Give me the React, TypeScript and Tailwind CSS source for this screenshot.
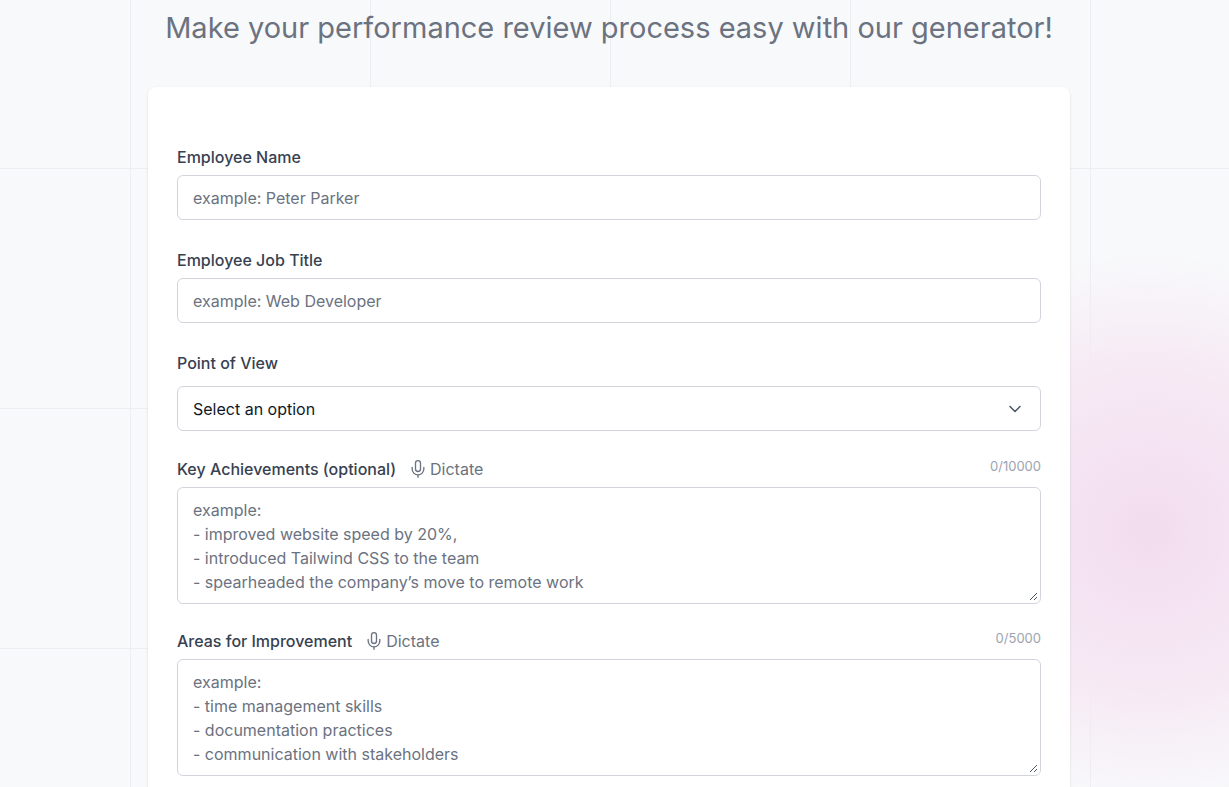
import { ChevronDown, Mic } from "lucide-react";

const font = { fontFamily: "Inter, 'Noto Sans', sans-serif" };

function Label({ text, dictate, count }: { text: string; dictate?: boolean; count?: string }) {
  return (
    <div className="mb-2 flex h-[20px] items-center justify-between">
      <div className="flex items-center gap-3">
        <span className="text-[16px] font-medium text-[#374151]">{text}</span>
        {dictate && (
          <span className="flex items-center gap-0.5 text-[16px] text-[#6b7280]">
            <Mic className="h-5 w-5" strokeWidth={1.6} />
            Dictate
          </span>
        )}
      </div>
      {count && <span className="-mt-1 text-[13px] text-[#9ca3af]">{count}</span>}
    </div>
  );
}

function Input({ placeholder }: { placeholder: string }) {
  return (
    <div className="flex h-[45px] items-center rounded-md border border-[#d1d5db] bg-white px-[15px] text-[16px] text-[#6b7280]">
      {placeholder}
    </div>
  );
}

function Area({ lines }: { lines: string[] }) {
  return (
    <div className="relative h-[117px] rounded-md border border-[#d1d5db] bg-white px-[15px] pt-[10px] text-[16px] leading-6 text-[#6b7280]">
      {lines.map((l) => (
        <div key={l}>{l}</div>
      ))}
      <svg className="absolute bottom-0.5 right-0.5 h-2.5 w-2.5" viewBox="0 0 10 10">
        <path d="M9 2L2 9M9 6L6 9" stroke="#4b5563" strokeWidth="1" />
      </svg>
    </div>
  );
}

export default function App() {
  return (
    <div
      className="relative min-h-[787px] overflow-hidden bg-[#f8f9fb] bg-[linear-gradient(to_right,#eceef2_1px,transparent_1px),linear-gradient(to_bottom,#eceef2_1px,transparent_1px)] bg-[size:240px_240px] bg-[position:130px_168px]"
      style={font}
    >
      <div className="pointer-events-none absolute right-[-200px] top-[250px] h-[560px] w-[560px] rounded-full bg-[radial-gradient(circle,#f2dcef_0%,#f6e9f4_40%,transparent_70%)]" />
      <div className="relative w-[1218px]">
        <h1 className="pt-[8px] text-center text-[29px] leading-10 text-[#6b7280]">
          Make your performance review process easy with our generator!
        </h1>
        <div className="mx-auto mt-[39px] w-[922px] rounded-lg bg-white px-[29px] pb-10 pt-[60px] shadow-sm">
          <div className="flex flex-col gap-[32px]">
            <div>
              <Label text="Employee Name" />
              <Input placeholder="example: Peter Parker" />
            </div>
            <div className="-mt-[2px]">
              <Label text="Employee Job Title" />
              <Input placeholder="example: Web Developer" />
            </div>
            <div className="-mt-[2px]">
              <Label text="Point of View" />
              <div className="mt-[13px] flex h-[45px] items-center justify-between rounded-md border border-[#d1d5db] bg-white px-[15px] text-[16px] text-[#111827]">
                Select an option
                <ChevronDown className="h-5 w-5 text-[#4b5563]" strokeWidth={1.8} />
              </div>
            </div>
            <div className="-mt-[4px]">
              <Label text="Key Achievements (optional)" dictate count="0/10000" />
              <Area
                lines={[
                  "example:",
                  "- improved website speed by 20%,",
                  "- introduced Tailwind CSS to the team",
                  "- spearheaded the company’s move to remote work",
                ]}
              />
            </div>
            <div className="-mt-[5px]">
              <Label text="Areas for Improvement" dictate count="0/5000" />
              <Area
                lines={[
                  "example:",
                  "- time management skills",
                  "- documentation practices",
                  "- communication with stakeholders",
                ]}
              />
            </div>
          </div>
        </div>
      </div>
    </div>
  );
}
